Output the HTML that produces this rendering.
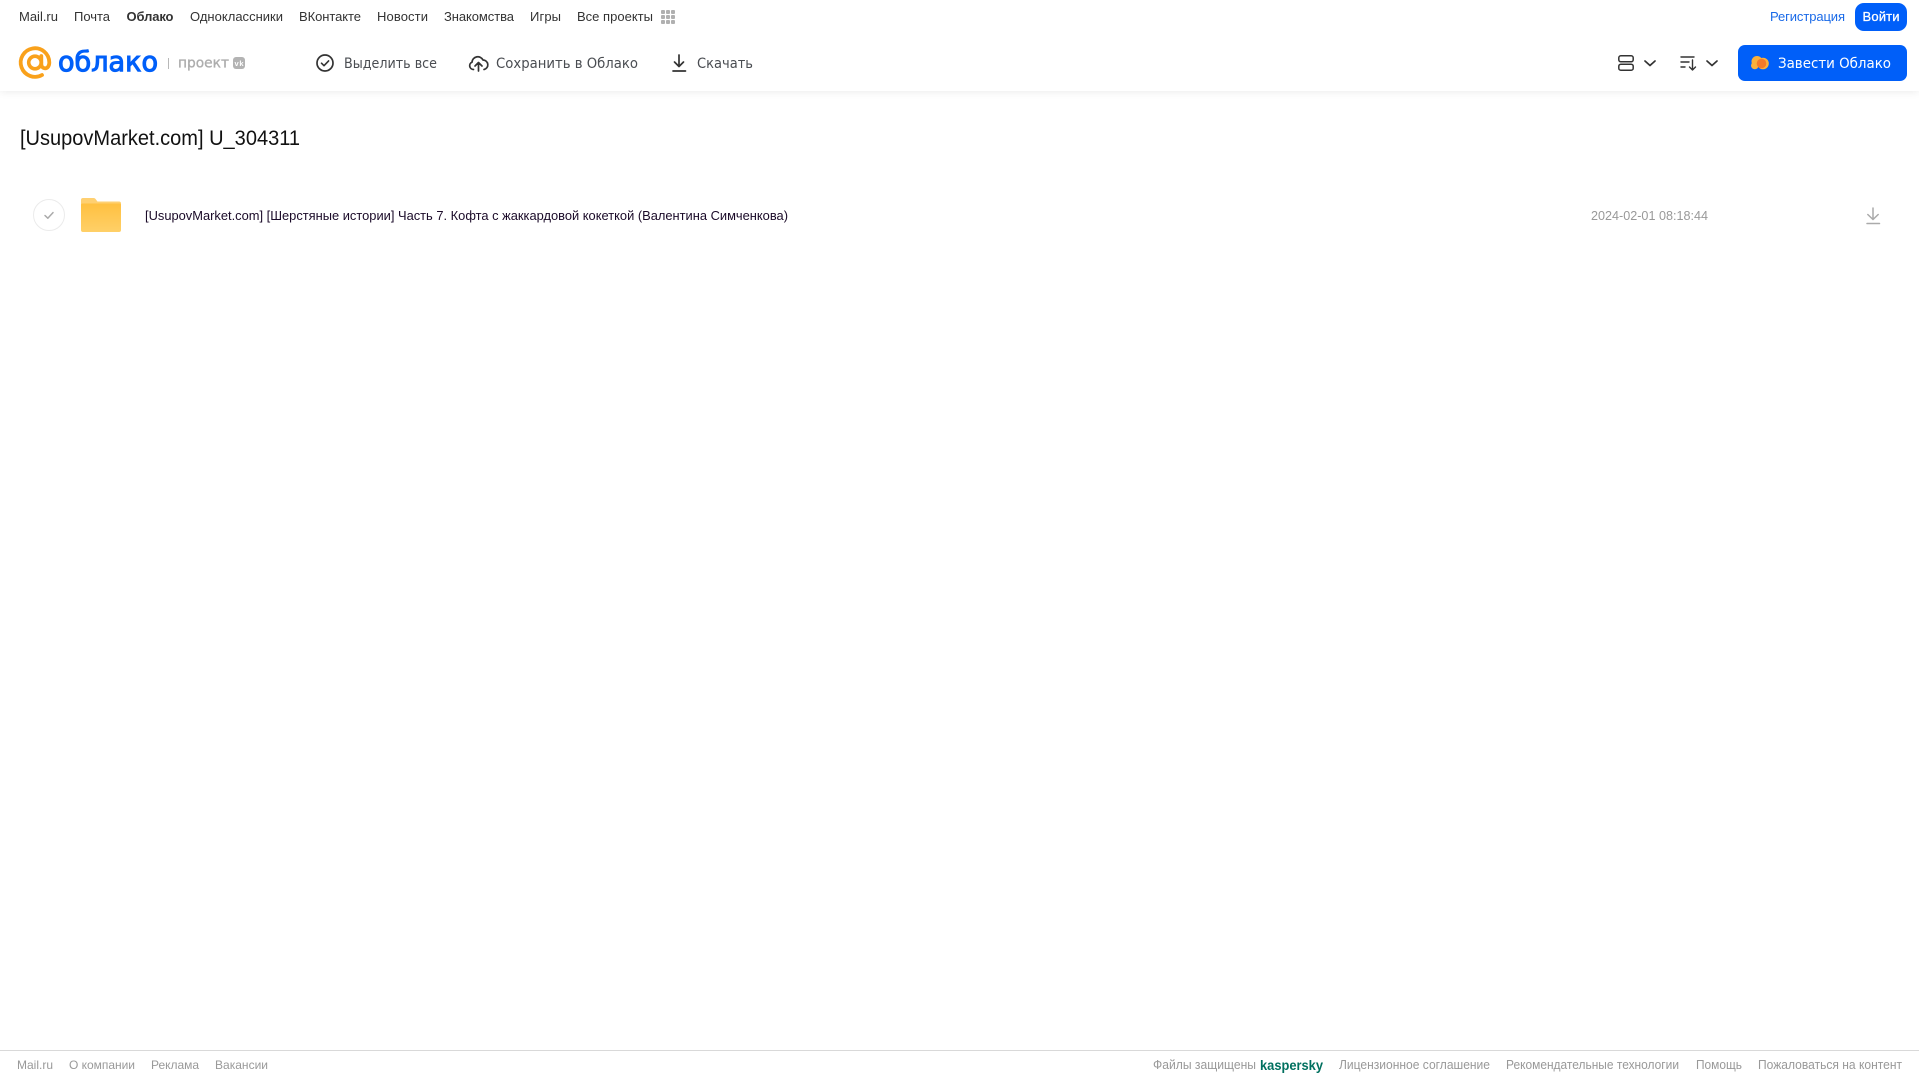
<!DOCTYPE html>
<html lang="ru"><head><meta charset="utf-8"><title>Облако</title>
<style>
html,body{margin:0;padding:0;background:#fff;width:1919px;height:1079px;overflow:hidden}
svg{display:block;position:absolute;left:0;top:0}
text{font-family:"Liberation Sans",sans-serif}
.n{font-size:13px;fill:#333}
.h{font-family:"DejaVu Sans",sans-serif;font-size:14px;fill:#4a4d52}
.f{font-size:12px;fill:#999}
.g{font-size:13px;fill:#999}
#hdr{position:absolute;left:0;top:0;width:1919px;height:91px;background:#fff;box-shadow:0 1px 8px rgba(0,0,0,.08)}
</style></head><body>
<div id="hdr"></div>
<svg width="1919" height="1079" viewBox="0 0 1919 1079" xmlns="http://www.w3.org/2000/svg">
<defs><linearGradient id="fo" x1="0" y1="0" x2="0" y2="1"><stop offset="0" stop-color="#ffc040"/><stop offset="1" stop-color="#ffd068"/></linearGradient></defs>
<!-- top nav -->
<text class="n" x="19" y="21" textLength="39">Mail.ru</text>
<text class="n" x="74" y="21" textLength="36">Почта</text>
<text class="n" x="126.500" y="21" textLength="47" font-weight="700">Облако</text>
<text class="n" x="190" y="21" textLength="93">Одноклассники</text>
<text class="n" x="299" y="21" textLength="62">ВКонтакте</text>
<text class="n" x="377" y="21" textLength="51">Новости</text>
<text class="n" x="444" y="21" textLength="70">Знакомства</text>
<text class="n" x="530" y="21" textLength="31">Игры</text>
<text class="n" x="577" y="21" textLength="76">Все проекты</text>
<g fill="#b0b0b0">
<rect x="661" y="10" width="4" height="4" rx="1"/><rect x="666" y="10" width="4" height="4" rx="1"/><rect x="671" y="10" width="4" height="4" rx="1"/>
<rect x="661" y="15" width="4" height="4" rx="1"/><rect x="666" y="15" width="4" height="4" rx="1"/><rect x="671" y="15" width="4" height="4" rx="1"/>
<rect x="661" y="20" width="4" height="4" rx="1"/><rect x="666" y="20" width="4" height="4" rx="1"/><rect x="671" y="20" width="4" height="4" rx="1"/>
</g>
<text x="1770" y="21" font-size="13" fill="#1a6ae8" textLength="75">Регистрация</text>
<rect x="1855" y="3" width="52" height="28" rx="9" fill="#005ff9"/>
<text x="1862.500" y="21" font-size="13" fill="#fff" stroke="#fff" stroke-width=".3" textLength="37">Войти</text>

<!-- logo -->
<path d="M42 75A14.300 14.300 0 1 1 49.300 62.500c0 3.500-1.800 5.800-4.200 5.800s-3.800-2-3.800-4.600V56" fill="none" stroke="#f9a11b" stroke-width="3.800" stroke-linecap="round" stroke-linejoin="round"/>
<circle cx="35" cy="62.500" r="6.300" fill="none" stroke="#f9a11b" stroke-width="3.600"/>
<text x="58" y="71" font-size="28" fill="#005ff9" stroke="#005ff9" stroke-width="1.100" textLength="100" lengthAdjust="spacingAndGlyphs" style="font-family:'DejaVu Sans',sans-serif">облако</text>
<rect x="168" y="58" width="1" height="11" fill="#b8b8b8"/>
<text x="178" y="67.500" font-size="14" fill="#adadad" stroke="#adadad" stroke-width=".35" textLength="51" lengthAdjust="spacingAndGlyphs" style="font-family:'DejaVu Sans',sans-serif">проект</text>
<rect x="233" y="57" width="12" height="12" rx="3" fill="#b3b3b3"/>
<text x="234.500" y="66" font-size="7.500" font-weight="700" fill="#fff" textLength="9">vk</text>

<!-- actions -->
<circle cx="325" cy="63" r="8" fill="none" stroke="#333" stroke-width="1.700"/>
<path d="M321.500 63.200l2.500 2.500 4.600-4.800" fill="none" stroke="#333" stroke-width="1.600" stroke-linecap="round" stroke-linejoin="round"/>
<text class="h" x="344" y="68" textLength="93" lengthAdjust="spacingAndGlyphs">Выделить все</text>

<path d="M473.500 69.500a3.800 3.800 0 0 1-1.500-7.300 5.800 5.800 0 0 1 11-2.200 4.800 4.800 0 0 1 1 9.500M478.500 71v-8M475 66l3.500-3.500L482 66" fill="none" stroke="#333" stroke-width="1.700" stroke-linecap="round" stroke-linejoin="round"/>
<text class="h" x="496" y="68" textLength="142" lengthAdjust="spacingAndGlyphs">Сохранить в Облако</text>

<path d="M679 55v11M674.500 62l4.500 4.500 4.500-4.500M673 71h12.500" fill="none" stroke="#333" stroke-width="1.700" stroke-linecap="round" stroke-linejoin="round"/>
<text class="h" x="697" y="68" textLength="56" lengthAdjust="spacingAndGlyphs">Скачать</text>

<!-- right tools -->
<rect x="1618.800" y="55.800" width="14.400" height="6" rx="2" fill="none" stroke="#333" stroke-width="1.500"/>
<rect x="1618.800" y="64.200" width="14.400" height="6" rx="2" fill="none" stroke="#333" stroke-width="1.500"/>
<path d="M1645 61l5 4.500 5-4.500" fill="none" stroke="#333" stroke-width="1.700" stroke-linecap="round" stroke-linejoin="round"/>
<path d="M1681 57h13M1681 62h8M1681 67h4M1692.500 60v10M1689.500 67l3 3 3-3" fill="none" stroke="#333" stroke-width="1.400" stroke-linecap="round" stroke-linejoin="round"/>
<path d="M1707 61l5 4.500 5-4.500" fill="none" stroke="#333" stroke-width="1.700" stroke-linecap="round" stroke-linejoin="round"/>

<rect x="1738" y="45" width="169" height="36" rx="7" fill="#005ff9"/>
<g fill="#fbb03b">
<circle cx="1757" cy="61.500" r="5.500"/><circle cx="1754.800" cy="65.500" r="3.800"/><circle cx="1763" cy="63.500" r="5.800"/>
</g>
<circle cx="1761.500" cy="63.500" r="4.800" fill="#f47a2a"/>
<text class="h" x="1778" y="68" textLength="113" lengthAdjust="spacingAndGlyphs" style="fill:#fff">Завести Облако</text>

<!-- title -->
<text x="20" y="145" font-size="21" fill="#111" textLength="280" lengthAdjust="spacingAndGlyphs">[UsupovMarket.com] U_304311</text>

<!-- row -->
<circle cx="49" cy="215" r="15.500" fill="#fff" stroke="#ebebeb"/>
<path d="M45 215.500l2.800 2.700 5.200-5.600" fill="none" stroke="#aaa" stroke-width="1.500" stroke-linecap="round" stroke-linejoin="round"/>
<path d="M81 200a2 2 0 0 1 2-2h10.500c1.400 0 2.200 1 3 2.200l.9 1.300H119a2 2 0 0 1 2 2v4.500H81z" fill="#ffd071"/>
<path d="M81 205a1.500 1.500 0 0 1 1.500-1.500h37a1.500 1.500 0 0 1 1.500 1.500v25a2 2 0 0 1-2 2H83a2 2 0 0 1-2-2z" fill="url(#fo)"/>
<text x="145" y="220" font-size="13" fill="#1a0a28" textLength="643" lengthAdjust="spacingAndGlyphs">[UsupovMarket.com] [Шерстяные истории] Часть 7. Кофта с жаккардовой кокеткой (Валентина Симченкова)</text>
<text x="1591" y="220" font-size="13" fill="#999" textLength="117" lengthAdjust="spacingAndGlyphs">2024-02-01 08:18:44</text>
<path d="M1873 208v11M1867.800 214.500l5.200 5 5.200-5M1867 223.500h12.500" fill="none" stroke="#aaa" stroke-width="1.500" stroke-linecap="round" stroke-linejoin="round"/>

<!-- footer -->
<rect x="0" y="1050" width="1919" height="1" fill="#d9d9d9"/>
<text class="f" x="17" y="1069" textLength="36">Mail.ru</text>
<text class="f" x="69" y="1069" textLength="66">О компании</text>
<text class="f" x="151" y="1069" textLength="48">Реклама</text>
<text class="f" x="215" y="1069" textLength="53">Вакансии</text>
<text class="g" x="1153" y="1069" textLength="103" lengthAdjust="spacingAndGlyphs">Файлы защищены</text>
<text x="1260" y="1070" font-size="13.500" font-weight="700" fill="#00705f" textLength="63" lengthAdjust="spacingAndGlyphs">kaspersky</text>
<text class="g" x="1339" y="1069" textLength="151" lengthAdjust="spacingAndGlyphs">Лицензионное соглашение</text>
<text class="g" x="1506" y="1069" textLength="173" lengthAdjust="spacingAndGlyphs">Рекомендательные технологии</text>
<text class="g" x="1696" y="1069" textLength="46" lengthAdjust="spacingAndGlyphs">Помощь</text>
<text class="g" x="1758" y="1069" textLength="144" lengthAdjust="spacingAndGlyphs">Пожаловаться на контент</text>
</svg>
</body></html>
